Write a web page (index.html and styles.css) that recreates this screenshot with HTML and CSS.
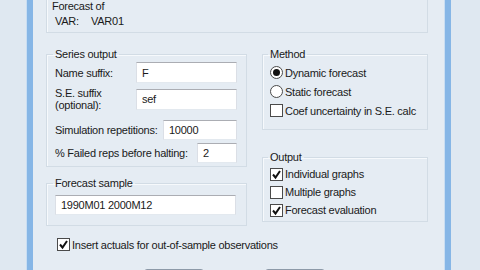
FILE: index.html
```html
<!DOCTYPE html>
<html lang="en">
<head>
  <meta charset="UTF-8" />
  <title>Forecast</title>
  <link rel="stylesheet" href="styles.css">
</head>
<body>
  <div class="screen">
    <div class="frame"></div>
    <div class="edge"></div>

    <div class="dialog">
      <!-- Forecast of -->
      <div class="target">
        <div class="target-title">Forecast of</div>
        <div class="target-var"><span class="var-key">VAR:</span><span>VAR01</span></div>
      </div>

      <div class="columns">
        <div class="col-left">
          <fieldset class="group series">
            <legend>Series output</legend>
            <div class="row row-name">
              <label>Name suffix:</label>
              <input class="field w-wide" type="text" value="F">
            </div>
            <div class="row row-se">
              <label>S.E. suffix<br>(optional):</label>
              <input class="field w-wide" type="text" value="sef">
            </div>
            <div class="row row-sim">
              <label>Simulation repetitions:</label>
              <input class="field w-mid" type="text" value="10000">
            </div>
            <div class="row row-fail">
              <label>% Failed reps before halting:</label>
              <input class="field w-small" type="text" value="2">
            </div>
          </fieldset>

          <fieldset class="group sample">
            <legend>Forecast sample</legend>
            <input class="field w-full" type="text" value="1990M01 2000M12">
          </fieldset>
        </div>

        <div class="col-right">
          <fieldset class="group method">
            <legend>Method</legend>
            <div class="opt"><span class="radio on"></span><span>Dynamic forecast</span></div>
            <div class="opt"><span class="radio"></span><span>Static forecast</span></div>
            <div class="opt"><span class="box"></span><span>Coef uncertainty in S.E. calc</span></div>
          </fieldset>

          <fieldset class="group output">
            <legend>Output</legend>
            <div class="opt"><span class="box checked"><svg viewBox="0 0 11 11" width="11" height="11"><path d="M2 5.5 L4.5 8.5 L9 2" fill="none" stroke="#111" stroke-width="2"/></svg></span><span>Individual graphs</span></div>
            <div class="opt"><span class="box"></span><span>Multiple graphs</span></div>
            <div class="opt"><span class="box checked"><svg viewBox="0 0 11 11" width="11" height="11"><path d="M2 5.5 L4.5 8.5 L9 2" fill="none" stroke="#111" stroke-width="2"/></svg></span><span>Forecast evaluation</span></div>
          </fieldset>
        </div>
      </div>

      <div class="opt actuals">
        <span class="box checked"><svg viewBox="0 0 11 11" width="11" height="11"><path d="M2 5.5 L4.5 8.5 L9 2" fill="none" stroke="#111" stroke-width="2"/></svg></span>
        <span>Insert actuals for out-of-sample observations</span>
      </div>

      <!-- dialog buttons, only their top edge is in view -->
      <div class="buttons">
        <span class="btn" aria-label="OK"></span>
        <span class="btn" aria-label="Cancel"></span>
      </div>
    </div>

    <div class="edge"></div>
    <div class="frame"></div>
  </div>
</body>
</html>
```

FILE: styles.css
```css
body {
  margin: 0;
  font-family: "Liberation Sans", Arial, sans-serif;
  font-size: 11px;
  letter-spacing: -0.25px;
  color: #1a1a1a;
  overflow: hidden;
}
.screen {
  display: flex;
  width: 480px;
  height: 270px;
  overflow: hidden;
  background: #dfe8f1;
}
.frame {
  flex: 1;
  background: #dfe8f1;
}
.frame:first-child {
  flex: 0 0 26px;
}
.edge {
  flex: 0 0 6px;
  background: #86b6e6;
  border-left: 1px solid #c9def3;
}
.dialog {
  flex: 0 0 411px;
  box-sizing: border-box;
  padding: 0 16px 0 13px;
  background: #e5ecf3;
}
.target {
  margin-top: -5px;
  height: 38px;
  box-sizing: border-box;
  border: 1px solid #d2dce5;
  box-shadow: inset 1px 1px 0 #f6f9fc;
  padding: 3px 0 0 5px;
  line-height: 14px;
}
.target-var {
  margin-top: 1px;
  padding-left: 3px;
}
.var-key {
  display: inline-block;
  width: 36px;
}
.columns {
  display: flex;
  gap: 15px;
  margin-top: 15px;
}
.col-left {
  flex: 0 0 201px;
  min-width: 0;
}
.col-right {
  flex: 1;
  min-width: 0;
}
.group {
  margin: 0;
  border: 1px solid #d2dce5;
  box-shadow: inset 1px 1px 0 #f6f9fc;
  min-width: 0;
}
.group legend {
  padding: 0 2px;
  margin-left: -2px;
  line-height: 13px;
}
.series {
  padding: 0 9px 3px 8px;
}
.row {
  display: flex;
  justify-content: space-between;
  align-items: center;
}
.row label {
  line-height: 12px;
}
.row-name {
  margin-top: 1px;
}
.row-se {
  margin-top: 4px;
}
.row-sim {
  margin-top: 9px;
}
.row-fail {
  margin-top: 3px;
}
.field {
  box-sizing: border-box;
  height: 21px;
  margin: 0;
  padding: 0 0 0 5px;
  border: 1px solid #dbdfe6;
  border-top-color: #abadb3;
  border-bottom-color: #e3e9ef;
  background: #fff;
  font-family: inherit;
  font-size: 11px;
  letter-spacing: -0.25px;
  color: #1a1a1a;
}
.row-sim .field,
.row-fail .field {
  height: 20px;
}
.w-wide { width: 101px; }
.w-mid { width: 74px; }
.w-small { width: 40px; }
.w-full { width: 181px; }
.sample {
  margin-top: 10px;
  padding: 5px 9px 10px 8px;
}
.sample .field {
  height: 20px;
}
.opt {
  display: flex;
  align-items: center;
  gap: 2px;
  height: 19px;
}
.box,
.radio {
  box-sizing: border-box;
  width: 13px;
  height: 13px;
  flex: 0 0 13px;
  background: #fff;
  border: 1px solid #4a4a4a;
  display: flex;
  align-items: center;
  justify-content: center;
}
.radio {
  border-radius: 50%;
}
.radio.on::after {
  content: "";
  width: 7px;
  height: 7px;
  border-radius: 50%;
  background: #111;
}
.actuals {
  margin-top: 9px;
  padding-left: 11px;
}
.buttons {
  display: flex;
  gap: 61px;
  margin-top: 15px;
  padding-left: 98px;
}
.btn {
  width: 60px;
  height: 22px;
  box-sizing: border-box;
  border: 1px solid #8d9aa8;
  border-radius: 3px;
  background: #f2f4f6;
}
.method {
  padding: 2px 7px 9px 7px;
}
.output {
  margin-top: 21px;
  padding: 1px 7px 2px 7px;
}
.output .opt {
  height: 18px;
}
```
